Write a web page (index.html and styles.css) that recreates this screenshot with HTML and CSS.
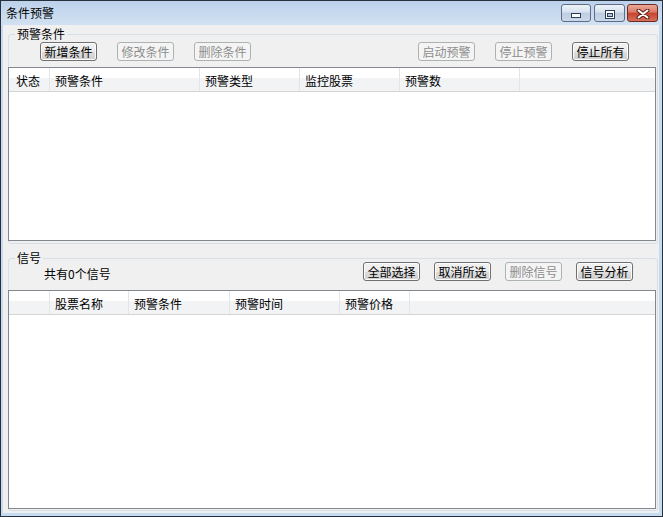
FILE: index.html
```html
<!DOCTYPE html>
<html lang="zh-CN">
<head>
    <meta charset="UTF-8">
    <title>条件预警</title>
    <link rel="stylesheet" href="styles.css">
</head>
<body>
    <div class="window">
        <div class="titlebar">
            <span class="title">条件预警</span>
            <div class="caption-buttons">
                <span class="cap cap-min">
                    <svg width="10" height="5" viewBox="0 0 10 5"><rect x="0.5" y="0.5" width="9" height="4" fill="#fff" stroke="#2b3d57"/></svg>
                </span>
                <span class="cap cap-max">
                    <svg width="10" height="9" viewBox="0 0 10 9"><rect x="0.5" y="0.5" width="9" height="8" fill="#fff" stroke="#2b3d57"/><rect x="2.5" y="3.5" width="5" height="3" fill="#b9c7da" stroke="#2b3d57"/></svg>
                </span>
                <span class="cap cap-close">
                    <svg width="14" height="10" viewBox="0 0 14 10">
                        <path d="M2.5 1.5 L11.5 8.5 M11.5 1.5 L2.5 8.5" stroke="#5a2019" stroke-width="4" stroke-linecap="round"/>
                        <path d="M2.5 1.5 L11.5 8.5 M11.5 1.5 L2.5 8.5" stroke="#fff" stroke-width="2" stroke-linecap="round"/>
                    </svg>
                </span>
            </div>
        </div>

        <div class="client">
            <fieldset class="group group-rules">
                <legend>预警条件</legend>
                <div class="toolbar toolbar-rules">
                    <button>新增条件</button>
                    <button disabled>修改条件</button>
                    <button disabled>删除条件</button>
                    <button class="push-right" disabled>启动预警</button>
                    <button disabled>停止预警</button>
                    <button>停止所有</button>
                </div>
                <div class="list list-rules">
                    <div class="list-header">
                        <span class="col col-first">状态</span>
                        <span class="col w150">预警条件</span>
                        <span class="col w100">预警类型</span>
                        <span class="col w100">监控股票</span>
                        <span class="col w120">预警数</span>
                    </div>
                </div>
            </fieldset>

            <fieldset class="group group-signals">
                <legend>信号</legend>
                <div class="toolbar toolbar-signals">
                    <span class="count">共有0个信号</span>
                    <button>全部选择</button>
                    <button>取消所选</button>
                    <button disabled>删除信号</button>
                    <button>信号分析</button>
                </div>
                <div class="list list-signals">
                    <div class="list-header">
                        <span class="col col-first"></span>
                        <span class="col w79">股票名称</span>
                        <span class="col w101">预警条件</span>
                        <span class="col w110">预警时间</span>
                        <span class="col w70">预警价格</span>
                    </div>
                </div>
            </fieldset>
        </div>
    </div>
</body>
</html>
```

FILE: styles.css
```css
* {
    box-sizing: border-box;
}

body {
    margin: 0;
    font-family: "Noto Sans CJK SC", "Noto Sans", sans-serif;
    font-size: 12px;
    color: #000;
    background: #fff;
}

.window {
    width: 663px;
    height: 517px;
    display: flex;
    flex-direction: column;
    border: 1px solid #27313d;
    background: linear-gradient(#bcd1ea, #d2e1f2 24px, #c6daf0 24px);
}

/* title bar */
.titlebar {
    height: 24px;
    flex-shrink: 0;
    display: flex;
    align-items: flex-start;
    padding: 0 4px 0 5px;
}

.title {
    margin-top: 5px;
    line-height: 14px;
}

.caption-buttons {
    margin-left: auto;
    margin-top: 3px;
    display: flex;
}

.cap {
    height: 18px;
    display: flex;
    align-items: center;
    justify-content: center;
    border: 1px solid #5b6d88;
    border-radius: 3px;
    background: linear-gradient(#eef3f9, #d7e1ee 45%, #bfcde0 50%, #cbd8e9);
}

.cap-min {
    width: 30px;
    padding-top: 5px;
}

.cap-max {
    width: 31px;
    margin-left: 3px;
    padding-top: 2px;
}

.cap-close {
    width: 31px;
    margin-left: 2px;
    padding-top: 1px;
    border-color: #6e2b22;
    background: linear-gradient(#eba898, #dc7a66 45%, #c8432f 50%, #d4705a);
}

/* client area */
.client {
    flex: 1;
    margin: 0 3px 3px 2px;
    background: #f0f0f0;
}

.group {
    margin: 0 1px 0 5px;
    padding: 0;
    min-width: 0;
    border: 1px solid #d5dfe5;
    border-radius: 3px;
}

.group legend {
    margin-left: 6px;
    padding: 0 2px;
    line-height: 14px;
}

.group-rules {
    margin-top: 2px;
    height: 217px;
}

.group-signals {
    margin-top: 7px;
    height: 260px;
}

.toolbar {
    height: 19px;
    display: flex;
}

.toolbar-rules {
    margin-top: 1px;
    gap: 20px;
    padding: 0 28px 0 31px;
}

.toolbar-signals {
    margin-top: -3px;
    gap: 14px;
    padding: 0 24px 0 35px;
}

.push-right {
    margin-left: auto;
}

.count {
    margin-right: auto;
    align-self: flex-end;
    line-height: 14px;
}

button {
    width: 57px;
    height: 19px;
    padding: 0;
    font: inherit;
    line-height: 15px;
    color: #000;
    border: 1px solid #707070;
    border-radius: 3px;
    background: linear-gradient(#f2f2f2, #ebebeb 50%, #dddddd 50%, #cfcfcf);
    box-shadow: inset 0 0 0 1px #fcfcfc;
}

button:disabled {
    color: #8d8d8d;
    border-color: #adb2b5;
    background: #f4f4f4;
    box-shadow: none;
}

/* list views */
.list {
    margin: 0 1px 0 -1px;
    border: 1px solid #828790;
    background: #fff;
}

.list-rules {
    margin-top: 6px;
    height: 174px;
}

.list-signals {
    margin-top: 9px;
    height: 219px;
}

.list-header {
    height: 24px;
    display: flex;
    border-bottom: 1px solid #d5d5d5;
    background: linear-gradient(#ffffff 45%, #f2f3f5 45%);
}

.col {
    padding: 6px 0 0 5px;
    line-height: 14px;
    border-right: 1px solid #e3e5e8;
    white-space: nowrap;
}

.col-first {
    width: 41px;
    padding-left: 7px;
}

.w150 { width: 150px; }
.w120 { width: 120px; }
.w110 { width: 110px; }
.w101 { width: 101px; }
.w100 { width: 100px; }
.w79 { width: 79px; }
.w70 { width: 70px; }
```
